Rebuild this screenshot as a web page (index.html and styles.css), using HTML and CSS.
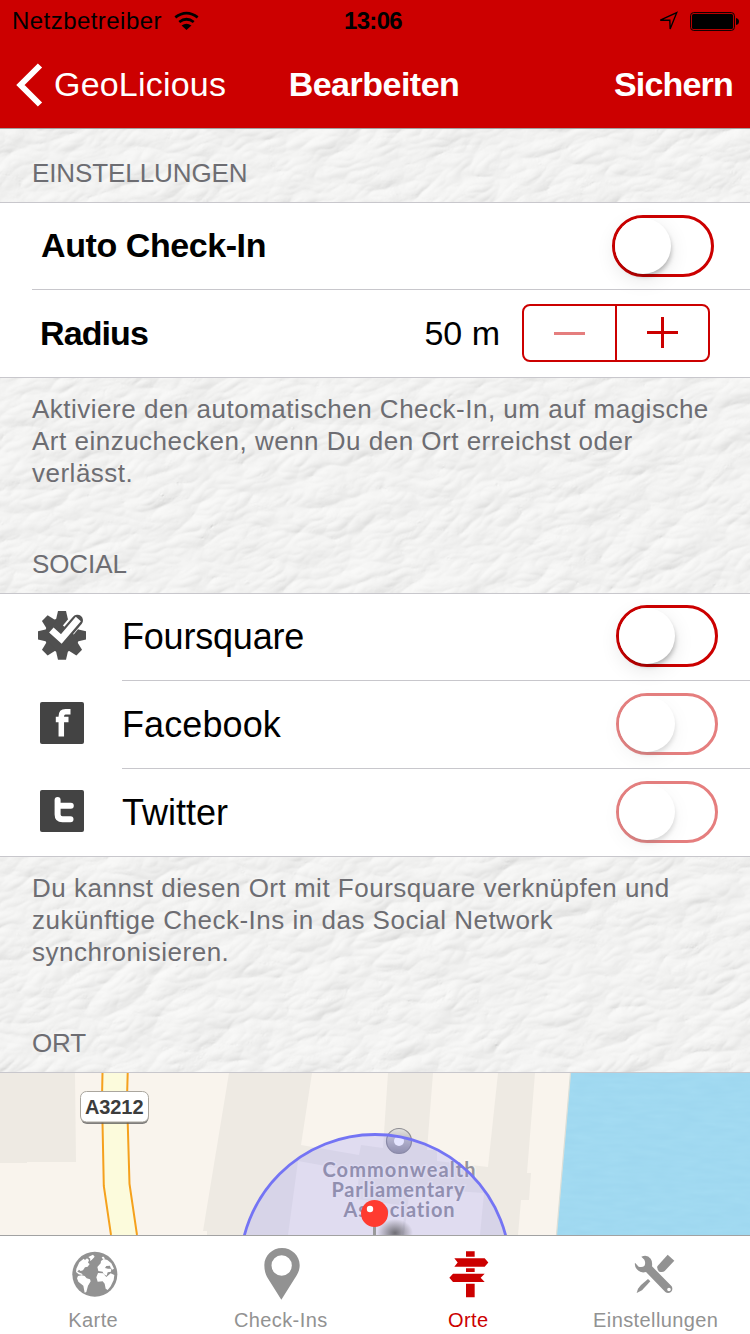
FILE: index.html
```
<!DOCTYPE html>
<html lang="de">
<head>
<meta charset="utf-8">
<title>Bearbeiten</title>
<link rel="stylesheet" href="styles.css">
</head>
<body>
<div class="screen">
  <svg class="leather" width="750" height="1334" aria-hidden="true">
    <filter id="grain" x="0" y="0" width="100%" height="100%" color-interpolation-filters="sRGB">
      <feTurbulence type="turbulence" baseFrequency="0.016 0.03" numOctaves="3" seed="21"/>
      <feColorMatrix values="0 0 0 0 0  0 0 0 0 0  0 0 0 0 0  1 0 0 0 0"/>
      <feDiffuseLighting surfaceScale="1.3" diffuseConstant="1" lighting-color="#fafaf9">
        <feDistantLight azimuth="245" elevation="75"/>
      </feDiffuseLighting>
      <feGaussianBlur stdDeviation=".7"/>
    </filter>
    <rect x="-500" y="-300" width="1800" height="2000" transform="rotate(-18 375 667)" filter="url(#grain)"/>
  </svg>

  <header class="header">
    <div class="status">
      <div class="carrier">
        <span>Netzbetreiber</span>
        <svg class="wifi" viewBox="522 30 76 60" width="25" height="20">
          <path d="M526 49Q560 23 594 49M538 63Q560 46 582 63" fill="none" stroke="#000" stroke-width="8.5"/>
          <path d="M545 74Q560 62 575 74L560 87Z"/>
        </svg>
      </div>
      <span class="clock">13:06</span>
      <div class="power">
        <svg viewBox="848 28 64 64" width="21" height="21">
          <path d="M855 56L905 33L885 83L884 56Z" fill="none" stroke="#000" stroke-width="4.2"/>
        </svg>
        <svg class="battery" viewBox="0 0 50 20" width="50" height="20">
          <rect x=".6" y=".6" width="43.8" height="17.8" rx="3" fill="none" stroke="#000" stroke-width="1"/>
          <rect x="2" y="2" width="41" height="15" rx="1.5"/>
          <path d="M46 6q3 .5 3 3.500t-3 3.500z"/>
        </svg>
      </div>
    </div>
    <nav class="nav">
      <a class="back">
        <svg viewBox="0 0 28 44" width="28" height="44"><path d="M25 2.500L5.500 22L25 41.500" fill="none" stroke="#fff" stroke-width="6"/></svg>
        <span>GeoLicious</span>
      </a>
      <h1 class="title">Bearbeiten</h1>
      <a class="save">Sichern</a>
    </nav>
  </header>

  <main class="content">
    <h2 class="section-head first">EINSTELLUNGEN</h2>
    <section class="group">
      <div class="row inset">
        <span class="label strong">Auto Check-In</span>
        <span class="switch"><i class="knob"></i></span>
      </div>
      <div class="row adjust">
        <span class="label strong radius">Radius</span>
        <span class="value">50 m</span>
        <div class="stepper">
          <span class="step off"><svg viewBox="0 0 32 32" width="32" height="32"><path d="M0 16.500H31" stroke="currentColor" stroke-width="3"/></svg></span>
          <span class="step"><svg viewBox="0 0 32 32" width="32" height="32"><path d="M0 15.500H31M15.500 0V31" stroke="currentColor" stroke-width="3"/></svg></span>
        </div>
      </div>
    </section>
    <p class="note">Aktiviere den automatischen Check-In, um auf magische<br>Art einzuchecken, wenn Du den Ort erreichst oder<br>verlässt.</p>

    <h2 class="section-head">SOCIAL</h2>
    <section class="group social">
      <div class="row">
        <span class="icon">
          <svg viewBox="114 62 144 146" width="48" height="48.700">
            <g fill="#505050">
              <circle cx="186" cy="135" r="52"/>
              <g id="teeth">
                <path id="tooth" d="M167 92L174 62H198L205 92Z"/>
                <use href="#tooth" transform="rotate(45 186 135)"/>
                <use href="#tooth" transform="rotate(90 186 135)"/>
                <use href="#tooth" transform="rotate(135 186 135)"/>
              </g>
              <use href="#teeth" transform="rotate(180 186 135)"/>
            </g>
            <path d="M205 119L236 81" stroke="#fff" stroke-width="42"/>
            <path d="M184 146L232 90" fill="none" stroke="#505050" stroke-width="34" stroke-linejoin="round" stroke-linecap="round"/>
            <path d="M154 119L184 146L235 86" fill="none" stroke="#fff" stroke-width="20"/>
          </svg>
        </span>
        <span class="label foursquare">Foursquare</span>
        <span class="switch"><i class="knob"></i></span>
      </div>
      <div class="row">
        <span class="icon square">
          <svg viewBox="0 0 44 42" width="44" height="42">
            <rect width="44" height="42" rx="2" fill="#434343"/>
            <path d="M21.300 34.500V14.500Q21.300 9.800 25.500 9.800H30.500M15.800 17.500H28.500" fill="none" stroke="#fff" stroke-width="5.500"/>
          </svg>
        </span>
        <span class="label facebook">Facebook</span>
        <span class="switch dim"><i class="knob"></i></span>
      </div>
      <div class="row">
        <span class="icon square">
          <svg viewBox="0 0 44 42" width="44" height="42">
            <rect width="44" height="42" rx="2" fill="#434343"/>
            <path d="M17.600 10V24.500Q17.600 29.300 22.500 29.300H30.500M18 15.800H30.800" fill="none" stroke="#fff" stroke-width="6" stroke-linecap="round"/>
          </svg>
        </span>
        <span class="label">Twitter</span>
        <span class="switch dim"><i class="knob"></i></span>
      </div>
    </section>
    <p class="note">Du kannst diesen Ort mit Foursquare verknüpfen und<br>zukünftige Check-Ins in das Social Network<br>synchronisieren.</p>

    <h2 class="section-head">ORT</h2>
    <svg class="map" viewBox="0 0 750 162" width="750" height="162">
      <defs>
        <radialGradient id="shade"><stop offset="0" stop-color="#333" stop-opacity=".65"/><stop offset="1" stop-color="#333" stop-opacity="0"/></radialGradient>
        <linearGradient id="badge" x2="0" y2="1"><stop offset="0" stop-color="#e4e3e0"/><stop offset="1" stop-color="#94939c"/></linearGradient>
        <filter id="ripple" x="0" y="0" width="100%" height="100%" color-interpolation-filters="sRGB">
          <feTurbulence type="fractalNoise" baseFrequency=".04 .18" numOctaves="2" seed="3"/>
          <feColorMatrix values="0 0 0 0 .5  0 0 0 0 .75  0 0 0 0 .88  .7 0 0 0 -.18"/>
          <feComposite in2="SourceGraphic" operator="in"/>
          <feMerge><feMergeNode in="SourceGraphic"/><feMergeNode/></feMerge>
        </filter>
      </defs>
      <rect width="750" height="162" fill="#f9f4ed"/>
      <g fill="#eeeae3">
        <path d="M0 0H75L76 89H27V90H0Z"/>
        <path d="M229 0H535L527 100H531L529 127H521L518 162H207V158H203Z"/>
      </g>
      <g fill="#f9f4ed">
        <path d="M312 0H388L383 75L361 72L359 82L301 72Z"/>
        <path d="M433 0H498L488 94L437 88V77H427Z"/>
        <path d="M298 88L359 99L357 126L405 133L402 162H288Z"/>
        <path d="M410 115L484 120L480 162H404Z"/>
      </g>
      <path d="M570.500 0H750V162H556.500Z" fill="#a3dbf2"/>
      <path d="M571 0H750V162H557Z" fill="#a3dbf2" filter="url(#ripple)" opacity=".3"/>
      <path d="M570.500 0L556.500 162" stroke="#dcdfd8" stroke-width="1.200"/>
      <path d="M102 0V52L104 113L111 162H137L129 111L128 50V0Z" fill="#fcfbdc"/>
      <path d="M102.500 0L102 25L103.800 113L111 162M127.700 0L127 25L129.500 111L137 162" fill="none" stroke="#f5a11d" stroke-width="2"/>
      <rect x="81" y="20" width="67.500" height="31" rx="6" fill="#555" opacity=".75"/>
      <rect x="80.500" y="18.500" width="68" height="30.500" rx="6" fill="#fff" stroke="#aaa69e"/>
      <text class="road" x="85" y="41" textLength="58.500">A3212</text>
      <circle cx="399" cy="68" r="12.500" fill="url(#badge)" stroke="#8d8c92" stroke-width="1.200"/>
      <circle cx="399" cy="68" r="5" fill="#fff"/>
      <g class="place" text-anchor="middle">
        <text x="399" y="104" textLength="153">Commonwealth</text>
        <text x="398" y="124.300" textLength="133">Parliamentary</text>
        <text x="399" y="144.300" textLength="111">Association</text>
      </g>
      <circle cx="375" cy="196.500" r="135" fill="#7b7bff" fill-opacity=".2" stroke="#7474f4" stroke-width="2.800"/>
      <ellipse cx="395" cy="160" rx="18" ry="14" fill="url(#shade)"/>
      <rect x="373" y="150" width="3" height="12" fill="#99999b"/>
      <circle cx="374.500" cy="140.500" r="13.500" fill="#ff3b30"/>
      <circle cx="370" cy="136" r="3.200" fill="#fff"/>
    </svg>
  </main>

  <footer class="tabs">
    <a class="tab">
      <svg viewBox="77 30 168 168" width="56" height="56">
        <circle cx="163.500" cy="115" r="67.500" fill="#929292"/>
        <g fill="#fff">
          <path d="M108 98L117 79L130 68L134 72L140 67L146 72L143 80L148 84L142 92L134 94L128 103L121 105L116 101L111 107L125 113L127 117L115 115L107 108Z"/>
          <path d="M144 63L158 56L163 62L154 72L149 75L150 68Z"/>
          <path d="M113 120L124 118L133 120L139 127L149 130L151 136L143 149L138 168L133 170L129 149L114 137L110 127Z"/>
          <path d="M171 93L181 82L182 75L190 69L201 72L213 82L221 98L216 101L210 94L209 89L198 90L194 96L203 98L213 98L212 107L202 109L199 119L190 115L187 107L174 105Z"/>
          <path d="M173 111L188 112L198 123L211 112L222 117L220 132L211 151L202 162L196 158L193 143L187 136L172 137L168 124Z"/>
          <path d="M184 63L190 62L194 68L187 69Z"/>
        </g>
      </svg>
      <span>Karte</span>
    </a>
    <a class="tab">
      <svg viewBox="640 30 168 168" width="56" height="56">
        <path fill="#929292" fill-rule="evenodd" d="M727 36C756 36 780 59 780 87C780 104 773 116 766 126L725 191L684 126C678 116 674 104 674 87C674 59 698 36 727 36ZM726 58A30.500 30.500 0 1 0 726 119A30.500 30.500 0 1 0 726 58Z"/>
      </svg>
      <span>Check-Ins</span>
    </a>
    <a class="tab active">
      <svg viewBox="62 30 168 168" width="56" height="56">
        <path fill="#c00" d="M137 46H163V62H137ZM102 67H193L204 79.500L193 92H102L112 79.500ZM137 97H163V108H137ZM98 113H193L181 125.500L193 138H98L87 125.500ZM137 143H163V184H137Z"/>
      </svg>
      <span>Orte</span>
    </a>
    <a class="tab">
      <svg viewBox="625 30 168 168" width="56" height="56">
        <g fill="#929292">
          <path d="M744 56L764 74L735 105Q730 110 719 107Q711 101 713 91Z"/>
          <path d="M685 129L692 136L667 163L651 171L655 158L664 147Z"/>
          <path fill-rule="evenodd" d="M665 62Q683 55 693 68Q699 76 697 91L756 151Q761 161 754 168Q745 174 737 168L679 108Q662 113 651 99Q644 90 646 80L657 92Q669 94 674 90Q679 82 674 71ZM748 155A5.500 5.500 0 1 0 748 166A5.500 5.500 0 1 0 748 155Z"/>
        </g>
      </svg>
      <span>Einstellungen</span>
    </a>
  </footer>
</div>
</body>
</html>
```
FILE: styles.css
```
* { box-sizing: border-box; }
body {
  margin: 0;
  font-family: "Liberation Sans", Arial, sans-serif;
  color: #000;
}
.screen {
  position: relative;
  isolation: isolate;
  display: flex;
  flex-direction: column;
  width: 750px;
  height: 1334px;
  overflow: hidden;
  background: #f2f2f1;
}
.leather { position: absolute; inset: 0; z-index: -1; }

.header { height: 129px; background: #c00; border-bottom: 1px solid #a2a2a2; }
.status {
  display: grid;
  grid-template-columns: 1fr auto 1fr;
  align-items: center;
  height: 40px;
  padding: 2px 10px 0 12px;
  font-size: 24px;
}
.carrier { display: flex; align-items: center; gap: 12px; letter-spacing: .45px; }
.clock { margin-right: 6px; font-weight: bold; letter-spacing: -.7px; }
.power { display: flex; align-items: center; justify-content: flex-end; gap: 11px; }
.battery { margin-top: 1px; }
.nav {
  display: grid;
  grid-template-columns: 1fr auto 1fr;
  align-items: center;
  height: 88px;
  padding: 0 17px 0 15px;
  color: #fff;
  font-size: 34px;
}
.back { display: flex; align-items: center; gap: 11px; letter-spacing: .2px; }
.back svg { margin-bottom: -1px; }
.title { margin: 0; font-size: 34px; font-weight: bold; letter-spacing: -.5px; }
.save { justify-self: end; font-weight: bold; letter-spacing: -.8px; }

.content { height: 1106px; }
.section-head {
  display: flex;
  align-items: flex-end;
  height: 103px;
  margin: 0;
  padding: 0 32px 14px;
  font-size: 26px;
  font-weight: normal;
  line-height: 30px;
  letter-spacing: -.1px;
  color: #6d6d72;
}
.section-head.first { height: 73px; }
.group { border-top: 1px solid #c8c7cc; background: #fff; }
.row {
  position: relative;
  display: flex;
  align-items: center;
  height: 88px;
  padding: 0 32px 1px;
}
.row:first-child { height: 87px; padding-bottom: 2px; }
.row::after {
  content: "";
  position: absolute;
  left: 122px;
  right: 0;
  bottom: 0;
  height: 1px;
  background: #c8c7cc;
}
.row:last-child::after { left: 0; }
.row.inset { padding-right: 36px; padding-left: 41px; }
.row.inset::after { left: 32px; }
.row.adjust { padding: 0 40px 2px; }
.label { flex: 1; font-size: 36px; }
.strong { font-size: 34px; font-weight: bold; letter-spacing: -.42px; }
.radius { letter-spacing: -.9px; }
.value { margin-right: 22px; font-size: 34px; }
.stepper {
  display: flex;
  width: 188px;
  height: 58px;
  border: 2px solid #c00;
  border-radius: 8px;
  color: #c00;
}
.step { flex: 1; display: grid; place-items: center; }
.step + .step { border-left: 2px solid #c00; }
.step svg { display: block; }
.off svg { opacity: .5; }

.social .row { padding-left: 0; padding-bottom: 2px; }
.social .row:first-child { padding-bottom: 3px; }
.social .label { padding-top: 2px; }
.icon { display: flex; justify-content: center; width: 122px; }
.icon svg { display: block; margin: 0 0 1px 2px; }
.icon.square svg { margin-bottom: 3px; }
.foursquare { letter-spacing: -.2px; }
.facebook { letter-spacing: .1px; }

.switch {
  width: 102px;
  height: 62px;
  border: 3px solid #c00;
  border-radius: 31px;
}
.switch.dim { opacity: .5; }
.knob {
  display: block;
  width: 56px;
  height: 56px;
  border-radius: 50%;
  background: #fff;
  box-shadow: 2px 4px 5px -2px rgba(0, 0, 0, .28), 0 6px 20px rgba(0, 0, 0, .1);
}

.note {
  height: 112px;
  margin: 0;
  padding: 15px 32px 0;
  font-size: 26px;
  line-height: 32px;
  letter-spacing: .5px;
  white-space: nowrap;
  color: #6d6d72;
}
.map { display: block; border-top: 1px solid #c8c7cc; box-sizing: content-box; }
.road { font: bold 20px "Liberation Sans", sans-serif; fill: #3c3c3c; }
.place {
  font: bold 20px Lato, "Liberation Sans", sans-serif;
  font-variant-ligatures: none;
  fill: #96949b;
  stroke: #fbf8f4;
  stroke-width: 3px;
  stroke-opacity: .6;
  paint-order: stroke;
}

.tabs {
  position: relative;
  display: grid;
  grid-template-columns: repeat(4, 1fr);
  height: 99px;
  border-top: 1px solid #a2a2a2;
  background: #fff;
}
.tab {
  display: flex;
  flex-direction: column;
  align-items: center;
  padding-top: 10px;
  font-size: 20px;
  line-height: 24px;
  color: #929292;
  letter-spacing: .4px;
}
.tab svg { display: block; margin-bottom: 6px; }
.tab span { margin-right: 1px; }
.tab.active { color: #c00; }
```
